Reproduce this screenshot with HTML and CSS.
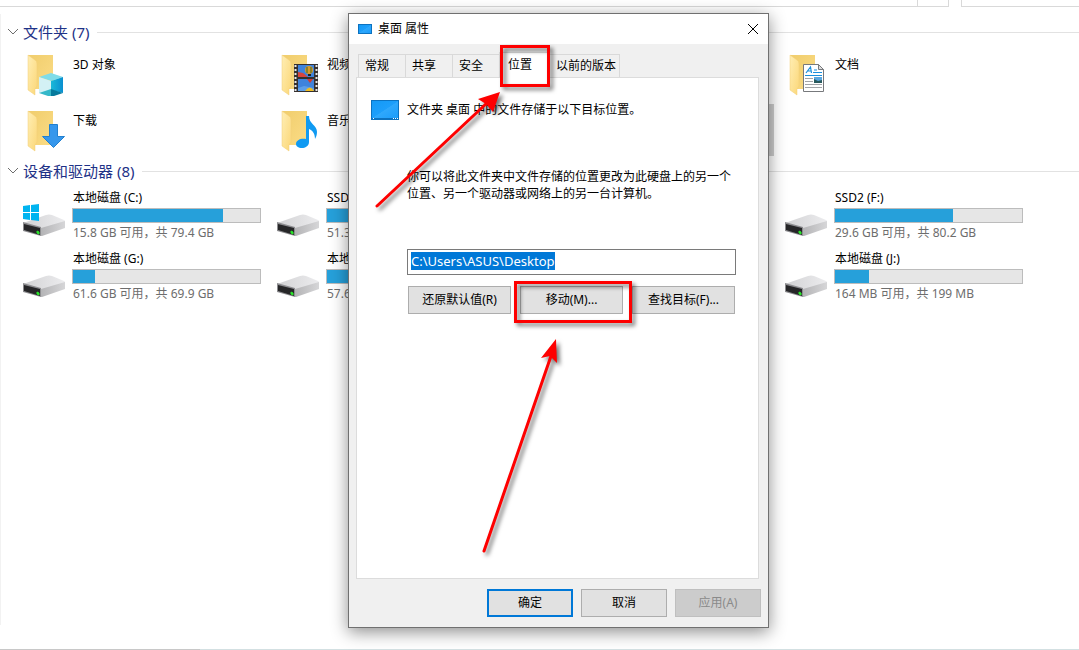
FILE: index.html
```html
<!DOCTYPE html>
<html lang="zh-CN">
<head>
<meta charset="utf-8">
<meta name="viewport" content="width=device-width, initial-scale=1">
<title>桌面 属性</title>
<link rel="stylesheet" href="styles.css">
</head>
<body>

<!-- shared icon parts -->
<svg class="defs" width="0" height="0">
  <defs>
    <linearGradient id="gback" x1="0" y1="0" x2="1" y2="1">
      <stop offset="0" stop-color="#f0cd6c"/><stop offset="1" stop-color="#fbdc86"/>
    </linearGradient>
    <linearGradient id="gflap" x1="0" y1="0" x2="1" y2="1">
      <stop offset="0" stop-color="#ffeeb4"/><stop offset="1" stop-color="#fbd778"/>
    </linearGradient>
    <linearGradient id="gtop" x1="0" y1="0" x2="1" y2="0">
      <stop offset="0" stop-color="#d2d2d4"/><stop offset="1" stop-color="#ececee"/>
    </linearGradient>
    <linearGradient id="gside" x1="0" y1="0" x2="1" y2="0">
      <stop offset="0" stop-color="#b4b4b6"/><stop offset="1" stop-color="#d6d6d8"/>
    </linearGradient>
    <linearGradient id="gcube" x1="0" y1="0" x2="1" y2="0">
      <stop offset="0" stop-color="#19b9d8"/><stop offset="1" stop-color="#0a8fd0"/>
    </linearGradient>
    <linearGradient id="gscreen" x1="0" y1="0" x2="1" y2="1">
      <stop offset="0" stop-color="#1499f5"/><stop offset=".5" stop-color="#1d9ffb"/><stop offset=".52" stop-color="#2fa8fc"/><stop offset="1" stop-color="#1b9dfb"/>
    </linearGradient>
    <symbol id="folder" viewBox="0 0 44 44">
      <path d="M6 3h25v34H13z" fill="url(#gback)"/>
      <path d="M6 3l7 5q2 1 2 4v22l-2 3v6l-7-5z" fill="url(#gflap)" stroke="#f3cf78" stroke-width=".5"/>
    </symbol>
    <symbol id="drive" viewBox="0 0 44 48">
      <path d="M1 34l23-8q3-1 6 0l12 5q1 0 1 2L19 40z" fill="url(#gtop)"/>
      <path d="M19 39l24-7v7l-23 8h-1z" fill="url(#gside)"/>
      <path d="M1 33l18 5v9L1 42z" fill="#8d8d90"/>
      <path d="M2 35l16 4v7L2 41z" fill="#262628"/>
      <path d="M15 42l2 1v2l-2-1z" fill="#2be62b" stroke="#2be62b"/>
    </symbol>
    <symbol id="screen" viewBox="0 0 28 20">
      <path d="M0 0h28v20H0z" fill="#0c72c0"/>
      <path d="M1 1h26v17H1z" fill="url(#gscreen)"/>
      <path d="M2 18.500h1M22 18.500h1M24 18.500h1M26 18.500h1" stroke="#fff"/>
    </symbol>
  </defs>
</svg>

<div class="explorer">
  <div class="toolbar">
    <div class="address"><span class="refresh"></span></div>
    <div class="search"></div>
  </div>

  <main class="files">
    <h2 class="group"><svg class="chevron" viewBox="0 0 12 8"><path d="M1 1l5 5 5-5"/></svg>文件夹 (7)</h2>
    <div class="grid folders">
      <div class="item">
        <svg class="icon" viewBox="0 0 44 44">
          <use href="#folder"/>
          <path d="M17 25l12-4 12 4-12 4z" fill="#7fdce8"/>
          <path d="M17 25l12 4v10l-12 2z" fill="#d3f1f5"/>
          <path d="M29 29l12-4v16l-12-3z" fill="url(#gcube)"/>
          <path d="M17 41l12-4v8z" fill="#35b8c9"/>
          <path d="M29 37l12 4-12 4z" fill="#067a9c"/>
        </svg>
        <span>3D 对象</span>
      </div>
      <div class="item">
        <svg class="icon" viewBox="0 0 44 44">
          <use href="#folder"/>
          <path d="M18 12h24v28H18z" fill="#35302f"/>
          <path d="M19.500 13v27M40.500 13v27" stroke="#e8e8e8" stroke-width="2" stroke-dasharray="2 2"/>
          <path d="M22 13h16v12H22zM22 27h16v12H22z" fill="#3f83dc"/>
          <path d="M22 20l5 1 5 4H22z" fill="#d8443c"/>
          <path d="M22 36l6-2 10 2v3H22z" fill="#5d9fe8"/>
          <circle cx="33" cy="18" r="4" fill="#d9982a"/>
          <path d="M31 15v6M35 15v6" stroke="#3b6b2b"/>
          <path d="M32 22h3v2h-3z" fill="#222"/>
          <path d="M31 27h6l-3 4z" fill="#d63a2e"/>
          <path d="M29 39q5-7 9 0z" fill="#f0bd22"/>
        </svg>
        <span>视频</span>
      </div>
      <div class="item last">
        <svg class="icon" viewBox="0 0 44 44">
          <use href="#folder"/>
          <path d="M19.500 12.500h15l5 5v22h-20z" fill="#fff" stroke="#77797c"/>
          <path d="M34.500 12.500v5h5z" fill="#ddd" stroke="#77797c"/>
          <path d="M22 21l4.500-6 1 6M24 19h3.500M30 18h3M29 20.500h9M21 23.500h17" fill="none" stroke="#1b8fdd" stroke-width="1.200"/>
          <path d="M21 26.500h8M21 29.500h8M21 32.500h17M21 35.500h17" stroke="#a2a4a8"/>
          <path d="M30 25h8v6h-8z" fill="#5aa7e0"/>
          <path d="M30 27l4 2 4-1v3h-8z" fill="#285a5e"/>
        </svg>
        <span>文档</span>
      </div>
      <div class="item">
        <svg class="icon" viewBox="0 0 44 44">
          <use href="#folder"/>
          <path d="M27.500 16.500h8v12h7L31.500 39.500l-11-11h7z" fill="#3697ec" stroke="#2280cf"/>
        </svg>
        <span>下载</span>
      </div>
      <div class="item">
        <svg class="icon" viewBox="0 0 44 44">
          <use href="#folder"/>
          <path d="M30 8h3c0 8 8 9 8 16 0 3-1 5-2 7 0-6-3-9-6-10v13c0 4-4 6-7 6-4 0-6-2-6-4 0-4 5-6 10-5z" fill="#109af2"/>
        </svg>
        <span>音乐</span>
      </div>
    </div>

    <h2 class="group"><svg class="chevron" viewBox="0 0 12 8"><path d="M1 1l5 5 5-5"/></svg>设备和驱动器 (8)</h2>
    <div class="grid drives">
      <div class="drive">
        <svg class="icon" viewBox="0 0 44 48">
          <use href="#drive"/>
          <path d="M1 17l7-1v7H1zM9 16l8-1v8H9zM1 24h7v7l-7-1zM9 24h8v8l-8-1z" fill="#00b4f0"/>
        </svg>
        <div class="info">
          <div class="name">本地磁盘 (C:)</div>
          <div class="bar"><div class="used" style="width:80%"></div></div>
          <div class="free">15.8 GB 可用，共 79.4 GB</div>
        </div>
      </div>
      <div class="drive">
        <svg class="icon" viewBox="0 0 44 48"><use href="#drive"/></svg>
        <div class="info">
          <div class="name">SSD</div>
          <div class="bar"><div class="used" style="width:50%"></div></div>
          <div class="free">51.3</div>
        </div>
      </div>
      <div class="drive last">
        <svg class="icon" viewBox="0 0 44 48"><use href="#drive"/></svg>
        <div class="info">
          <div class="name">SSD2 (F:)</div>
          <div class="bar"><div class="used" style="width:63%"></div></div>
          <div class="free">29.6 GB 可用，共 80.2 GB</div>
        </div>
      </div>
      <div class="drive">
        <svg class="icon" viewBox="0 0 44 48"><use href="#drive"/></svg>
        <div class="info">
          <div class="name">本地磁盘 (G:)</div>
          <div class="bar"><div class="used" style="width:12%"></div></div>
          <div class="free">61.6 GB 可用，共 69.9 GB</div>
        </div>
      </div>
      <div class="drive">
        <svg class="icon" viewBox="0 0 44 48"><use href="#drive"/></svg>
        <div class="info">
          <div class="name">本地</div>
          <div class="bar"><div class="used" style="width:50%"></div></div>
          <div class="free">57.6</div>
        </div>
      </div>
      <div class="drive last">
        <svg class="icon" viewBox="0 0 44 48"><use href="#drive"/></svg>
        <div class="info">
          <div class="name">本地磁盘 (J:)</div>
          <div class="bar"><div class="used" style="width:18%"></div></div>
          <div class="free">164 MB 可用，共 199 MB</div>
        </div>
      </div>
    </div>
  </main>
  <div class="bottomline"></div>
</div>

<div class="scroll"></div>

<div class="dialog" role="dialog" aria-labelledby="title">
  <div class="titlebar">
    <svg class="small-screen" viewBox="0 0 28 20" preserveAspectRatio="none"><path d="M0 0h28v20H0z" fill="#0c72c0"/><path d="M2 2h24v16H2z" fill="url(#gscreen)"/></svg>
    <span id="title">桌面 属性</span>
    <button type="button" class="close" aria-label="关闭"><svg viewBox="0 0 12 12"><path d="M1 1l10 10M11 1L1 11"/></svg></button>
  </div>

  <div class="tabs">
    <button type="button">常规</button>
    <button type="button">共享</button>
    <button type="button">安全</button>
    <button type="button" class="active">位置</button>
    <button type="button" class="wide">以前的版本</button>
  </div>

  <form class="panel" id="props">
    <div class="intro">
      <svg class="screen" viewBox="0 0 28 20"><use href="#screen"/></svg>
      <label for="path">文件夹 桌面 中的文件存储于以下目标位置。</label>
    </div>
    <div class="location">
      <p>你可以将此文件夹中文件存储的位置更改为此硬盘上的另一个位置、另一个驱动器或网络上的另一台计算机。</p>
      <input type="text" id="path" value="C:\Users\ASUS\Desktop" spellcheck="false">
      <div class="actions">
        <button type="button" class="btn">还原默认值(R)</button>
        <button type="button" class="btn">移动(M)...</button>
        <button type="button" class="btn">查找目标(F)...</button>
      </div>
    </div>
  </form>

  <div class="footer">
    <button type="submit" form="props" class="btn default">确定</button>
    <button type="button" class="btn">取消</button>
    <button type="button" class="btn" disabled>应用(A)</button>
  </div>

  <!-- red marks over the dialog -->
  <svg class="marks" viewBox="348 13 421 615">
    <path class="box" d="M501.500 46.500h47v39h-47zM515.500 282.500h115v39h-115z"/>
    <path class="line" d="M377 206L488 102M484 551L551 356"/>
    <path class="head" d="M500 92l-22 7 8 5 7 8zM556 339l-15 19 9-2 7 7z"/>
  </svg>
</div>

<script>
  const path = document.getElementById('path')
  path.focus()
  path.select()
</script>
</body>
</html>
```
FILE: styles.css
```css
* {
  box-sizing: border-box;
}

body {
  margin: 0;
  background: #fff;
  color: #000;
  font-family: "Noto Sans", "Noto Sans CJK SC", sans-serif;
  font-size: 12px;
  line-height: 18px;
}

button, input {
  font: inherit;
  color: inherit;
}

.defs {
  position: absolute;
}

/* Explorer window behind */
.explorer {
  display: flex;
  flex-direction: column;
  min-height: 100vh;
}

.toolbar {
  display: flex;
  gap: 12px;
  height: 7px;
}

.address {
  flex: 1;
  display: flex;
  justify-content: flex-end;
  border: 1px solid #d9d9d9;
  border-width: 0 1px 1px 0;
}

.refresh {
  width: 31px;
  border-left: 1px solid #d9d9d9;
}

.search {
  width: 118px;
  border: 1px solid #d9d9d9;
  border-width: 0 0 1px 1px;
}

.files {
  flex: 1;
  margin: 7px 0 24px;
  padding-top: 8px;
  border-left: 1px solid #f2f2f2;
}

.group {
  display: flex;
  align-items: center;
  margin: 0;
  padding-left: 6px;
  height: 20px;
  font-size: 15px;
  font-weight: normal;
  line-height: 20px;
  color: #1e3287;
}

.group::after {
  content: "";
  flex: 1;
  margin-left: 8px;
  border-top: 1px solid #e2e2e2;
}

.chevron {
  width: 12px;
  height: 8px;
  margin-right: 4px;
  fill: none;
  stroke: #6d6d6d;
}

.grid {
  display: grid;
  grid-template-columns: repeat(4, 1fr);
  padding: 0 41px 0 21px;
}

.folders {
  row-gap: 12px;
  padding-top: 10px;
  padding-bottom: 9px;
}

.drives {
  row-gap: 8px;
  padding-top: 8px;
}

.last {
  grid-column: 4;
}

.item, .drive {
  display: flex;
  gap: 6px;
}

.icon {
  flex: none;
  width: 44px;
  height: 44px;
}

.item span {
  padding: 4px 0 0 1px;
}

.drive .icon {
  height: 48px;
}

.info {
  flex: 1;
  margin-right: 15px;
}

.name, .free {
  padding-left: 1px;
  white-space: nowrap;
}

.free {
  color: #6d6d6d;
}

.bar {
  height: 15px;
  margin: 1px 0;
  border: 1px solid #bcbcbc;
  background: #e6e6e6;
}

.used {
  height: 100%;
  background: #26a0da;
}

.bottomline {
  height: 1px;
  background: linear-gradient(to right, #c8c8c8 200px, #d3e0e2 200px);
}

.scroll {
  position: absolute;
  left: 766px;
  top: 104px;
  width: 8px;
  height: 52px;
  background: #cdcdcd;
}

/* Properties dialog */
.dialog {
  position: absolute;
  left: 348px;
  top: 13px;
  width: 421px;
  border: 1px solid #707070;
  background: #f0f0f0;
  box-shadow: 0 4px 16px rgba(0, 0, 0, 0.45);
}

.titlebar {
  display: flex;
  align-items: center;
  gap: 6px;
  height: 30px;
  padding: 0 9px;
  background: #fff;
}

.small-screen {
  width: 14px;
  height: 10px;
}

.close {
  display: flex;
  margin-left: auto;
  padding: 0;
  border: 0;
  background: none;
}

.close svg {
  width: 12px;
  height: 12px;
  fill: none;
  stroke: #000;
}

.tabs {
  display: flex;
  align-items: flex-end;
  margin-top: 8px;
  padding-left: 9px;
}

.tabs button {
  width: 48px;
  height: 23px;
  margin-right: -1px;
  padding: 0 0 0 6px;
  border: 1px solid #d9d9d9;
  border-bottom: 0;
  background: #f0f0f0;
  text-align: left;
  white-space: nowrap;
}

.tabs .active {
  position: relative;
  z-index: 1;
  width: 51px;
  height: 26px;
  margin-bottom: -1px;
  padding: 0 0 2px 8px;
  background: #fff;
}

.tabs .wide {
  width: 71px;
}

.panel {
  height: 502px;
  margin: 0 9px 0 7px;
  padding: 22px 22px 0 14px;
  border: 1px solid #dcdcdc;
  background: #fff;
}

.intro {
  display: flex;
  align-items: center;
  gap: 8px;
}

.screen {
  width: 28px;
  height: 20px;
}

.location {
  padding-left: 36px;
}

.location p {
  margin: 48px 0 47px;
  line-height: 17px;
}

.location input {
  display: block;
  width: 100%;
  height: 26px;
  padding: 0 3px 3px;
  border: 1px solid #7a7a7a;
  background: #fff;
  font-size: 13px;
  outline: none;
}

.location input::selection {
  background: #0078d7;
  color: #fff;
}

.actions {
  display: flex;
  gap: 9px;
  margin: 11px 1px 0;
}

.btn {
  height: 28px;
  padding: 0;
  border: 1px solid #adadad;
  background: #e1e1e1;
}

.actions .btn {
  flex: 1;
}

.footer {
  display: flex;
  justify-content: flex-end;
  gap: 8px;
  padding: 10px 7px;
}

.footer .btn {
  width: 86px;
}

.footer .default {
  border: 2px solid #0078d7;
}

.btn:disabled {
  border-color: #bfbfbf;
  background: #ccc;
  color: #8a8a8a;
}

.marks {
  position: absolute;
  left: -1px;
  top: -1px;
  width: 421px;
  height: 615px;
  z-index: 2;
  pointer-events: none;
  filter: drop-shadow(3px 3px 2px rgba(0, 0, 0, 0.55));
}

.box, .line {
  fill: none;
  stroke: #fe0000;
  stroke-width: 3;
  stroke-linecap: round;
}

.head {
  fill: #fe0000;
}
```
